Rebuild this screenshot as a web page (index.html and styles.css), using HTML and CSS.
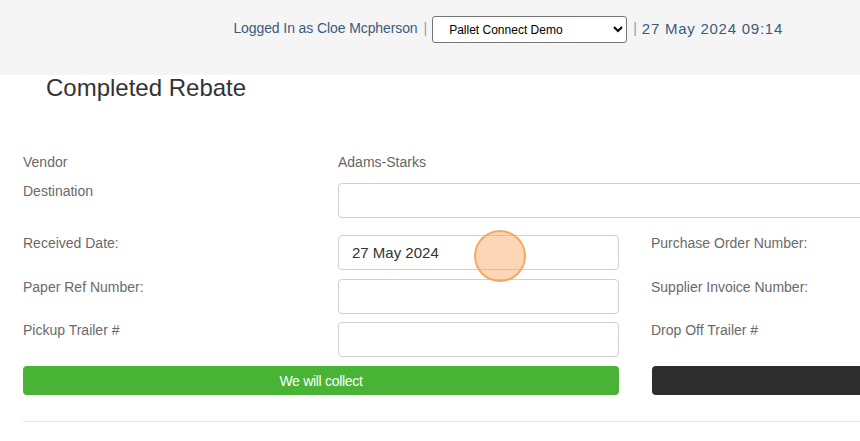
FILE: index.html
```html
<!DOCTYPE html>
<html>
<head>
<meta charset="utf-8">
<link rel="stylesheet" href="styles.css">
</head>
<body>
<div class="header">
  <span class="user">Logged In as Cloe Mcpherson</span>
  <span class="sep">|</span>
  <select class="company"><option>Pallet Connect Demo</option></select>
  <span class="sep sep2">|</span>
  <span class="date">27 May 2024 09:14</span>
</div>
<div class="page">
  <h1 class="title">Completed Rebate</h1>
  <div class="row row-vendor">
    <div class="label">Vendor</div>
    <div class="value">Adams-Starks</div>
  </div>
  <div class="row row-dest">
    <div class="label">Destination</div>
    <input class="input wide" type="text">
  </div>
  <div class="row row-recv">
    <div class="label">Received Date:</div>
    <input class="input" type="text" value="27 May 2024">
    <div class="label col4">Purchase Order Number:</div>
  </div>
  <div class="row row-paper">
    <div class="label">Paper Ref Number:</div>
    <input class="input" type="text">
    <div class="label col4">Supplier Invoice Number:</div>
  </div>
  <div class="row row-pickup">
    <div class="label">Pickup Trailer #</div>
    <input class="input" type="text">
    <div class="label col4">Drop Off Trailer #</div>
  </div>
  <div class="row row-buttons">
    <button class="btn btn-green">We will collect</button>
    <button class="btn btn-dark"></button>
  </div>
  <hr class="divider">
</div>
<div class="cursor"></div>
</body>
</html>
```
FILE: styles.css
```css
html, body {
  margin: 0;
  padding: 0;
  background: #ffffff;
  overflow: hidden;
  font-family: "Liberation Sans", Arial, sans-serif;
}
.header {
  height: 75px;
  background: #f5f5f5;
  display: flex;
  align-items: flex-start;
  justify-content: flex-end;
  padding: 16px 77px 0 0;
  box-sizing: border-box;
  color: #3b5b7d;
  font-size: 14px;
}
.header > span {
  line-height: 25px;
}
.user {
  letter-spacing: -0.1px;
}
.sep {
  color: #8a9aab;
  margin: 0 5px 0 6px;
}
.sep2 {
  margin: 0 5px 0 6px;
}
.date {
  font-size: 15px;
  letter-spacing: 0.75px;
}
.company {
  width: 195px;
  height: 27px;
  border: 1px solid #767676;
  border-radius: 3px;
  background: #ffffff;
  font-family: "Liberation Sans", Arial, sans-serif;
  font-size: 12px;
  color: #000;
  padding: 0 6px 0 12px;
}
.page {
  width: 1400px;
  padding-left: 23px;
}
.title {
  margin: 0 0 0 23px;
  font-weight: normal;
  font-size: 24px;
  line-height: 26px;
  color: #333333;
}
.row {
  display: grid;
  grid-template-columns: 315px 281px 32px 315px 281px;
  align-items: start;
}
.label, .value {
  font-size: 14px;
  line-height: 17px;
  color: #6a6a6a;
}
.value {
  color: #666;
}
.col4 {
  grid-column: 4;
}
.row-vendor {
  margin-top: 53px;
}
.row-dest {
  margin-top: 12px;
}
.row-recv {
  margin-top: 17px;
}
.row-paper {
  margin-top: 9px;
}
.row-pickup {
  margin-top: 8px;
}
.row-buttons {
  margin-top: 9px;
}
.input {
  box-sizing: border-box;
  height: 35px;
  width: 100%;
  border: 1px solid #cfcfd6;
  border-radius: 4px;
  padding: 0 13px;
  font-family: "Liberation Sans", Arial, sans-serif;
  font-size: 15px;
  color: #333;
  margin: 0;
  background: #fff;
}
.wide {
  grid-column: 2 / 6;
}
.btn {
  height: 29px;
  border: none;
  border-radius: 4px;
  font-family: "Liberation Sans", Arial, sans-serif;
  font-size: 14px;
  color: #fff;
  padding: 0;
  margin: 0;
}
.btn-green {
  grid-column: 1 / 3;
  background: #48b335;
  letter-spacing: -0.3px;
}
.btn-dark {
  grid-column: 4 / 6;
  margin-left: 1px;
  background: #2d2d2d;
}
.divider {
  border: none;
  border-top: 1px solid #e6e6e6;
  margin: 26px 0 0 0;
  width: 1300px;
}
.cursor {
  position: absolute;
  left: 474px;
  top: 230px;
  width: 48px;
  height: 48px;
  border-radius: 50%;
  background: rgba(250, 165, 95, 0.45);
  border: 2px solid rgba(245, 160, 80, 0.85);
}
```
